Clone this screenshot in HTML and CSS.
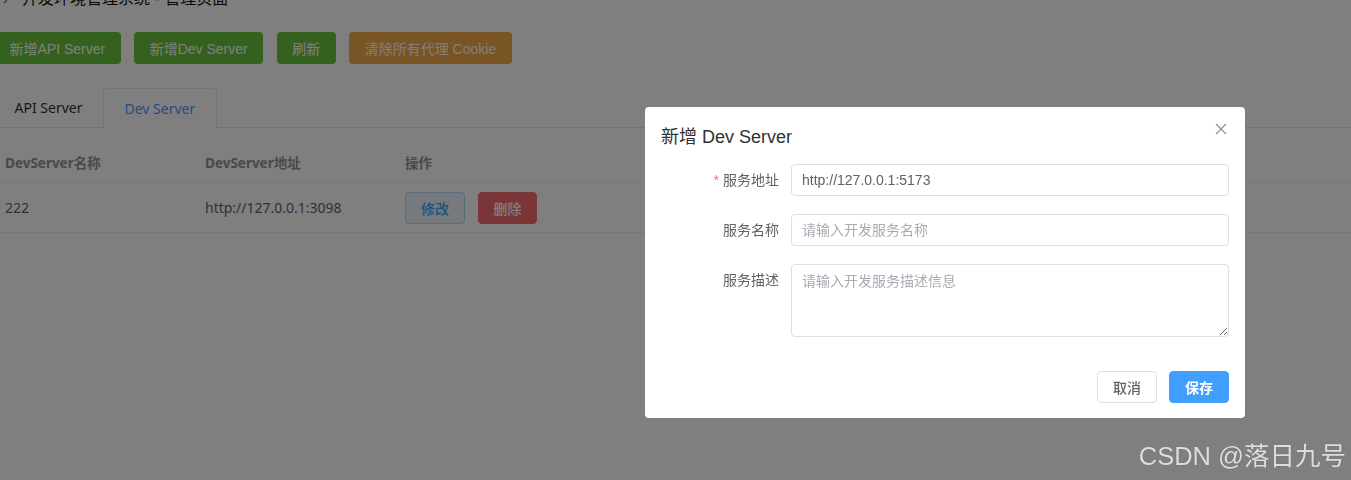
FILE: index.html
```html
<!DOCTYPE html>
<html lang="zh-CN">
<head>
<meta charset="utf-8">
<title>开发环境管理系统 - 管理页面</title>
<link rel="stylesheet" href="styles.css">
</head>
<body>
<div class="page">
  <div class="title-row">
    <span class="title-icon">›</span>
    <span class="title-text">开发环境管理系统 - 管理页面</span>
  </div>

  <div class="toolbar">
    <button class="btn btn-success">新增API Server</button>
    <button class="btn btn-success">新增Dev Server</button>
    <button class="btn btn-success">刷新</button>
    <button class="btn btn-warning">清除所有代理 Cookie</button>
  </div>

  <div class="tabs">
    <div class="tab">API Server</div>
    <div class="tab tab-active">Dev Server</div>
    <div class="tab-fill"></div>
  </div>

  <div class="table">
    <div class="tr thead">
      <div class="td c1">DevServer名称</div>
      <div class="td c2">DevServer地址</div>
      <div class="td c3">操作</div>
      <div class="td cfill"></div>
    </div>
    <div class="tr tbody">
      <div class="td c1">222</div>
      <div class="td c2">http://127.0.0.1:3098</div>
      <div class="td c3">
        <button class="sbtn sbtn-plain">修改</button>
        <button class="sbtn sbtn-danger">删除</button>
      </div>
      <div class="td cfill"></div>
    </div>
  </div>
</div>

<div class="mask"></div>

<div class="dialog">
  <div class="dialog-header">
    <span class="dialog-title">新增 Dev Server</span>
    <span class="dialog-close">
      <svg width="12" height="12" viewBox="0 0 12 12"><path d="M1 1 L11 11 M11 1 L1 11" stroke="#909399" stroke-width="1.3" fill="none"/></svg>
    </span>
  </div>
  <div class="dialog-body">
    <div class="form-item">
      <label class="form-label"><span class="req">*</span>服务地址</label>
      <div class="form-control"><input class="input" type="text" value="http://127.0.0.1:5173"></div>
    </div>
    <div class="form-item">
      <label class="form-label">服务名称</label>
      <div class="form-control"><input class="input" type="text" placeholder="请输入开发服务名称"></div>
    </div>
    <div class="form-item">
      <label class="form-label">服务描述</label>
      <div class="form-control"><textarea class="textarea" placeholder="请输入开发服务描述信息"></textarea></div>
    </div>
  </div>
  <div class="dialog-footer">
    <button class="fbtn fbtn-default">取消</button>
    <button class="fbtn fbtn-primary">保存</button>
  </div>
</div>

<div class="watermark">CSDN @落日九号</div>
</body>
</html>
```

FILE: styles.css
```css
html, body {
  margin: 0;
  padding: 0;
  background: #ffffff;
  overflow: hidden;
  height: 480px;
}

body {
  font-family: "Noto Sans", "Noto Sans CJK SC", sans-serif;
  color: #303133;
}

.page {
  padding: 0;
}

.title-row {
  height: 24px;
  line-height: 24px;
  margin-top: -13px;
  padding-left: 3px;
  font-family: "Liberation Sans", "Noto Sans CJK SC", sans-serif;
  font-size: 16px;
  color: #111;
  display: flex;
  align-items: center;
}

.title-icon {
  width: 19px;
  font-size: 14px;
  color: #333;
}

.toolbar {
  margin-top: 21px;
  margin-left: -6px;
  display: flex;
  gap: 13.5px;
}

.btn {
  height: 32px;
  padding: 0 15.5px;
  border: none;
  border-radius: 4px;
  font-family: "Liberation Sans", "Noto Sans CJK SC", sans-serif;
  font-size: 14px;
  color: #ffffff;
  cursor: pointer;
}

.btn-success {
  background: #6ac33c;
}

.btn-warning {
  background: #f2a94a;
}

.tabs {
  margin-top: 24px;
  margin-left: -6px;
  display: flex;
  height: 40px;
}

.tab {
  height: 39px;
  line-height: 40px;
  padding: 0 20.5px;
  font-size: 14px;
  color: #303133;
  border-bottom: 1px solid #e4e7ed;
}

.tab-active {
  color: #409eff;
  border: 1px solid #e4e7ed;
  border-bottom: 1px solid transparent;
  border-radius: 4px 4px 0 0;
  height: 39px;
}

.tab-fill {
  flex: 1;
  border-bottom: 1px solid #e4e7ed;
}

.table {
  margin-top: 14px;
  font-size: 14px;
}

.tr {
  display: flex;
  border-bottom: 1px solid #ebeef5;
}

.td {
  box-sizing: border-box;
  padding-left: 5px;
  display: flex;
  align-items: center;
}

.c1, .c2, .c3 {
  width: 200px;
}

.cfill {
  flex: 1;
}

.thead .td {
  height: 40px;
  font-weight: 700;
  color: #909399;
  font-size: 13.5px;
}

.tbody .td {
  height: 49px;
  color: #606266;
}

.sbtn {
  height: 32px;
  width: 60px;
  border-radius: 4px;
  font-family: "Noto Sans", "Noto Sans CJK SC", sans-serif;
  font-size: 14px;
  font-weight: 500;
  cursor: pointer;
  padding: 0;
}

.sbtn-plain {
  background: #ecf5ff;
  border: 1px solid #b3d8ff;
  color: #409eff;
}

.sbtn-danger {
  margin-left: 13px;
  width: 59px;
  background: #f56c6c;
  border: 1px solid #f56c6c;
  color: #ffffff;
}

.mask {
  position: fixed;
  inset: 0;
  background: rgba(0, 0, 0, 0.5);
}

.dialog {
  position: absolute;
  left: 645px;
  top: 107px;
  width: 600px;
  height: 311px;
  box-sizing: border-box;
  background: #ffffff;
  border-radius: 4px;
  font-family: "Liberation Sans", "Noto Sans CJK SC", sans-serif;
  display: flex;
  flex-direction: column;
}

.dialog-header {
  padding: 18px 16px 0 16px;
  height: 24px;
  display: flex;
  justify-content: space-between;
  align-items: center;
}

.dialog-title {
  font-size: 18px;
  line-height: 24px;
  color: #303133;
}

.dialog-close {
  width: 12px;
  height: 12px;
  margin-top: -16px;
  margin-right: 2px;
  display: flex;
}

.dialog-body {
  padding: 15px 16px 0 16px;
}

.form-item {
  display: flex;
  margin-bottom: 18px;
}

.form-label {
  width: 130px;
  box-sizing: border-box;
  padding-right: 12px;
  text-align: right;
  font-size: 14px;
  line-height: 32px;
  height: 32px;
  color: #606266;
}

.req {
  color: #f56c6c;
  margin-right: 4px;
}

.form-control {
  flex: 1;
  display: flex;
}

.input {
  width: 100%;
  height: 32px;
  box-sizing: border-box;
  border: 1px solid #dcdfe6;
  border-radius: 4px;
  padding: 0 10px;
  font-family: "Liberation Sans", "Noto Sans CJK SC", sans-serif;
  font-size: 14px;
  color: #606266;
  outline: none;
}

.textarea {
  width: 100%;
  height: 73px;
  box-sizing: border-box;
  border: 1px solid #dcdfe6;
  border-radius: 4px;
  padding: 5px 10px;
  font-family: "Liberation Sans", "Noto Sans CJK SC", sans-serif;
  font-size: 14px;
  line-height: 22px;
  color: #606266;
  resize: vertical;
  outline: none;
  display: block;
}

.input::placeholder, .textarea::placeholder {
  color: #a8abb2;
}

.dialog-footer {
  padding: 16px 16px 15px 16px;
  display: flex;
  justify-content: flex-end;
  gap: 12px;
}

.fbtn {
  height: 32px;
  width: 60px;
  border-radius: 4px;
  font-family: "Liberation Sans", "Noto Sans CJK SC", sans-serif;
  font-size: 14px;
  font-weight: 500;
  padding: 0;
  cursor: pointer;
}

.fbtn-default {
  background: #ffffff;
  border: 1px solid #dcdfe6;
  color: #606266;
}

.fbtn-primary {
  background: #409eff;
  border: 1px solid #409eff;
  color: #ffffff;
  font-weight: 700;
}

.watermark {
  position: absolute;
  right: 5px;
  bottom: 9px;
  font-family: "Liberation Sans", "Noto Sans CJK SC", sans-serif;
  font-size: 25.5px;
  line-height: 30px;
  color: rgba(235, 235, 235, 0.9);
  text-shadow: 0 0 1px rgba(0, 0, 0, 0.3);
}
```
